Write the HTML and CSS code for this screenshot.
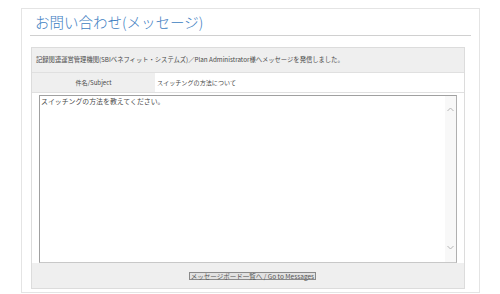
FILE: index.html
```html
<!DOCTYPE html>
<html lang="ja">
<head>
    <meta charset="UTF-8">
    <meta name="viewport" content="width=device-width, initial-scale=1.0">
    <title>お問い合わせ(メッセージ)</title>
    <link rel="stylesheet" href="styles.css">
</head>
<body>
    <div class="card">
        <h1 class="page-title">お問い合わせ(メッセージ)</h1>

        <div class="panel">
            <div class="notice">記録関連運営管理機関(SBIベネフィット・システムズ)／Plan Administrator様へメッセージを発信しました。</div>
            <div class="subject-row">
                <div class="subject-label">件名/Subject</div>
                <div class="subject-value">スイッチングの方法について</div>
            </div>
            <div class="body-row">
                <div class="textbox">
                    <textarea readonly>スイッチングの方法を教えてください。</textarea>
                    <div class="scrollbar">
                        <svg width="7" height="5" viewBox="0 0 7 5"><path d="M0.5 4 L3.5 1 L6.5 4" fill="none" stroke="#b5b5b5" stroke-width="1"/></svg>
                        <svg width="7" height="5" viewBox="0 0 7 5"><path d="M0.5 1 L3.5 4 L6.5 1" fill="none" stroke="#b5b5b5" stroke-width="1"/></svg>
                    </div>
                </div>
            </div>
            <div class="actions">
                <button type="button" class="back-button">メッセージボード一覧へ / Go to Messages</button>
            </div>
        </div>
    </div>
</body>
</html>
```

FILE: styles.css
```css
/* General Reset */
* {
    box-sizing: border-box;
    margin: 0;
    padding: 0;
    font-family: "Noto Sans CJK JP", "Noto Sans", sans-serif;
}

body {
    background-color: #fff;
    color: #4a4a4a;
}

/* Outer card */
.card {
    margin: 8px 20px 0 21px;
    height: 285px;
    border: 1px solid #e4e4e4;
    padding: 0 14px 0 8px;
}

.page-title {
    height: 27px;
    padding: 2px 0 0 5px;
    font-size: 14.5px;
    font-weight: 300;
    line-height: 22px;
    color: #3c7dc1;
    border-bottom: 1px solid #d0d0d0;
    margin-right: -6px;
}

/* Message panel */
.panel {
    margin: 11px 0 0 1px;
    border: 1px solid #dcdcdc;
    background-color: #efefef;
}

.notice {
    height: 25px;
    padding: 0 4px;
    font-size: 6.3px;
    line-height: 24px;
    border-bottom: 1px solid #e0e0e0;
}

.subject-row {
    display: flex;
    height: 20px;
    border-bottom: 1px solid #e0e0e0;
    font-size: 6.1px;
    line-height: 19px;
}

.subject-label {
    width: 123px;
    text-align: center;
}

.subject-value {
    flex: 1;
    background-color: #fff;
    padding-left: 2px;
}

.body-row {
    background-color: #fff;
    padding: 2px 7px 0 7px;
}

.textbox {
    display: flex;
    height: 168px;
    border: 1px solid #a0a0a0;
    border-right-color: #b0b0b0;
    border-bottom-color: #c8c8c8;
    background-color: #fff;
}

.textbox textarea {
    flex: 1;
    border: none;
    outline: none;
    resize: none;
    overflow: hidden;
    padding: 1px 0 0 1px;
    font-size: 6.9px;
    line-height: 9px;
    color: #4a4a4a;
}

.scrollbar {
    width: 11px;
    background-color: #f8f8f8;
    display: flex;
    flex-direction: column;
    justify-content: space-between;
    align-items: center;
    padding: 11px 0 12px;
}

/* Footer button */
.actions {
    height: 25px;
    display: flex;
    justify-content: center;
    align-items: center;
    padding: 1px 0 0 9px;
}

.back-button {
    height: 8px;
    padding: 0 1px;
    font-size: 6.5px;
    line-height: 6px;
    color: #555;
    background-color: #e2e2e2;
    border: 1px solid #8a8a8a;
}
```
